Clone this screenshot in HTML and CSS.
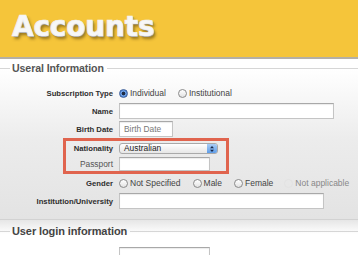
FILE: index.html
```html
<!DOCTYPE html>
<html>
<head>
<meta charset="utf-8">
<link rel="stylesheet" href="styles.css">
</head>
<body>
<header class="banner"><h1 class="title">Accounts</h1></header>

<section class="panel panel-info">
  <div class="legend"><span class="legend-line short"></span><span class="legend-text">Useral Information</span><span class="legend-line"></span></div>
  <div class="rows">
    <div class="row">
      <span class="label">Subscription Type</span>
      <div class="choices">
        <span class="opt"><span class="radio on"></span>Individual</span>
        <span class="opt"><span class="radio"></span>Institutional</span>
      </div>
    </div>
    <div class="row">
      <span class="label">Name</span>
      <span class="field w-name"></span>
    </div>
    <div class="row">
      <span class="label">Birth Date</span>
      <span class="field w-date placeholder">Birth Date</span>
    </div>
    <div class="highlight">
      <div class="row hl-row">
        <span class="label">Nationality</span>
        <span class="select"><span class="select-text">Australian</span><span class="stepper"><svg width="6" height="8" viewBox="0 0 6 8"><path d="M1 3.2 L3 1 L5 3.2 Z M1 4.8 L3 7 L5 4.8 Z" fill="#1b2a4a"/></svg></span></span>
      </div>
      <div class="row hl-row">
        <span class="label light">Passport</span>
        <span class="field w-pass"></span>
      </div>
    </div>
    <div class="row">
      <span class="label">Gender</span>
      <div class="choices">
        <span class="opt"><span class="radio"></span>Not Specified</span>
        <span class="opt"><span class="radio"></span>Male</span>
        <span class="opt"><span class="radio"></span>Female</span>
        <span class="opt disabled"><span class="radio"></span>Not applicable</span>
      </div>
    </div>
    <div class="row">
      <span class="label">Institution/University</span>
      <span class="field w-inst"></span>
    </div>
  </div>
</section>

<section class="panel panel-login">
  <div class="legend"><span class="legend-line short"></span><span class="legend-text">User login information</span><span class="legend-line"></span></div>
  <div class="rows">
    <div class="row">
      <span class="label"></span>
      <span class="field w-pass"></span>
    </div>
  </div>
</section>
</body>
</html>
```

FILE: styles.css
```css
html, body {
  margin: 0;
  padding: 0;
}
body {
  width: 358px;
  height: 255px;
  overflow: hidden;
  background: #fff;
  font-family: "Liberation Sans", Arial, sans-serif;
  color: #333;
}
.banner {
  height: 57px;
  background: #f5c53a;
  border-bottom: 2px solid #b4b0a6;
  box-shadow: 0 1px 1px rgba(0,0,0,0.15);
  box-sizing: content-box;
}
.title {
  margin: 0;
  padding: 13px 0 0 12px;
  font-family: "DejaVu Sans", sans-serif;
  font-size: 28px;
  line-height: 28px;
  font-weight: bold;
  letter-spacing: -0.2px;
  color: #f7f7f7;
  -webkit-text-stroke: 0.7px #f2f2f2;
  text-shadow: 1px 1px 0 #9a9a9a, 2px 3px 3px rgba(60,40,0,0.5);
}
.panel-info {
  background: linear-gradient(#ffffff 10px, #ececec 80px, #e3e3e3);
  padding: 1px 0 9px;
  border-bottom: 1px solid #d2d2d2;
}
.legend {
  display: flex;
  align-items: center;
  height: 16px;
}
.legend-line {
  flex: 1;
  height: 1px;
  background: #d6d6d6;
}
.legend-line.short {
  flex: 0 0 10px;
}
.legend-text {
  padding: 0 3px 0 2px;
  font-size: 10.6px;
  font-weight: bold;
  color: #555;
  letter-spacing: -0.1px;
}
.rows {
  margin-top: 8px;
  display: flex;
  flex-direction: column;
}
.row {
  display: grid;
  grid-template-columns: 113px 1fr;
  column-gap: 6px;
  align-items: center;
  height: 18px;
}
.label {
  text-align: right;
  font-size: 7.7px;
  font-weight: bold;
  color: #2e2e2e;
  white-space: nowrap;
}
.label.light {
  font-weight: normal;
  color: #555;
  font-size: 8.4px;
}
.choices {
  display: flex;
  align-items: center;
  font-size: 8.5px;
  color: #444;
}
.opt {
  display: flex;
  align-items: center;
  gap: 2px;
  margin-right: 12px;
  white-space: nowrap;
}
.opt.disabled {
  color: #888;
  margin-right: 0;
  margin-left: -1px;
}
.opt.disabled .radio {
  border-color: #e2e2e2;
  background: transparent;
}
.radio {
  width: 7px;
  height: 7px;
  border: 1px solid #8a8a8a;
  border-radius: 50%;
  background: linear-gradient(#fff, #e2e2e2);
  display: inline-block;
  box-sizing: content-box;
}
.radio.on {
  border-color: #3b5e9a;
  background: radial-gradient(circle, #1d2b45 0 1.6px, #6fa3e8 2.2px, #4a7fd0 4px);
}
.field {
  display: block;
  height: 16px;
  box-sizing: border-box;
  background: #fff;
  border: 1px solid #c4c4c4;
  border-top-color: #a8a8a8;
  box-shadow: inset 0 1px 1px rgba(0,0,0,0.08);
}
.w-name { width: 215px; }
.w-date { width: 54px; }
.w-pass { width: 91px; height: 14px; }
.w-inst { width: 205px; }
.placeholder {
  font-size: 8.4px;
  color: #777;
  padding-left: 4px;
  line-height: 14px;
}
.highlight {
  width: 166px;
  margin: 0 0 0 63px;
  border: 3px solid #e0644e;
  box-sizing: border-box;
  height: 36px;
}
.hl-row {
  grid-template-columns: 47px 1fr;
  height: 15px;
}
.select {
  display: flex;
  align-items: center;
  width: 99px;
  height: 11px;
  box-sizing: border-box;
  border: 1px solid #a9a9a9;
  border-radius: 3px;
  background: linear-gradient(#ffffff, #e6e6e6);
}
.select-text {
  flex: 1;
  font-size: 8.4px;
  color: #222;
  padding-left: 4px;
  line-height: 9px;
}
.stepper {
  width: 10px;
  height: 9px;
  border-radius: 0 2px 2px 0;
  background: linear-gradient(#a9cdf6, #5f9de8);
  display: flex;
  align-items: center;
  justify-content: center;
}
.panel-login {
  background: linear-gradient(#e6e6e6, #ffffff 14px);
  padding-top: 3px;
}
.panel-login .legend-text {
  font-size: 11px;
  color: #444;
}
.panel-login .rows {
  margin-top: 6px;
}
```
